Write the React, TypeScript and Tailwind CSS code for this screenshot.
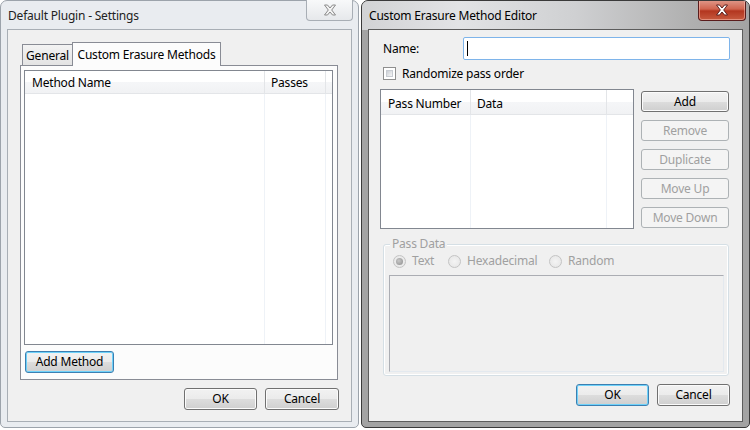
import React from "react";

function CloseGlyph({ active }: { active: boolean }) {
  return (
    <svg width="14" height="12" viewBox="0 0 14 12">
      <path
        d="M1.5 1 H4.5 L7 4 L9.5 1 H12.5 L8.7 6 L12.5 11 H9.5 L7 8 L4.5 11 H1.5 L5.3 6 Z"
        fill={active ? "#ffffff" : "#f4f4f4"}
        stroke={active ? "#5a2020" : "#8a8a8a"}
        strokeWidth="1"
        strokeLinejoin="round"
      />
    </svg>
  );
}

function Btn({
  label,
  w,
  h = 22,
  disabled,
  def,
  className = "",
}: {
  label: string;
  w: string;
  h?: number;
  disabled?: boolean;
  def?: boolean;
  className?: string;
}) {
  let cls =
    "flex items-center justify-center rounded-[3px] border text-[12px] leading-none ";
  if (disabled) {
    cls += "border-[#adb2b5] bg-[#f4f4f4] text-[#a0a0a0] ";
  } else if (def) {
    cls +=
      "border-[#3c7fb1] bg-[linear-gradient(#f2f2f2_0%,#ebebeb_50%,#dddddd_50%,#cfcfcf_100%)] text-black shadow-[inset_0_0_0_1px_#6fd2fa] ";
  } else {
    cls +=
      "border-[#707070] bg-[linear-gradient(#f2f2f2_0%,#ebebeb_50%,#dddddd_50%,#cfcfcf_100%)] text-black shadow-[inset_0_0_0_1px_#fbfbfb] ";
  }
  return (
    <div className={cls + w + " " + className} style={{ height: h }}>
      {label}
    </div>
  );
}

function Radio({ checked }: { checked?: boolean }) {
  return (
    <div className="w-[13px] h-[13px] rounded-full border border-[#c4c4c4] bg-[radial-gradient(circle,#f4f4f4,#e4e4e4)] flex items-center justify-center shrink-0">
      {checked && (
        <div className="w-[7px] h-[7px] rounded-full bg-[radial-gradient(circle_at_40%_40%,#c8c8c8,#8c8c8c)]" />
      )}
    </div>
  );
}

export default function App() {
  return (
    <div className="w-[750px] h-[430px] bg-white flex font-['Noto_Sans',sans-serif] text-[12px] tracking-[-0.2px] text-black overflow-hidden select-none">
      {/* Left window (inactive) */}
      <div className="w-[359px] h-[428px] rounded-t-[7px] rounded-b-[5px] border border-[#9ca3ab] bg-[#e9ecf0] flex flex-col px-[6px] pb-[5px]">
        <div className="h-[28px] flex items-start relative">
          <div className="pt-[6px] pl-[1px] text-[12px] text-[#222]">
            Default Plugin - Settings
          </div>
          <div className="absolute right-[-1px] top-[-1px] w-[47px] h-[21px] rounded-b-[4px] border border-t-0 border-[#a8aeb5] bg-[linear-gradient(#f8f9fa,#e6e8eb)] flex items-center justify-center">
            <CloseGlyph active={false} />
          </div>
        </div>
        <div className="flex-1 border border-[#a8aeb5] bg-[#f0f0f0] flex flex-col">
          <div className="pl-[12px] pt-[12px] w-[331px]">
            <div className="h-[23px] flex items-end pl-[2px]">
              <div className="w-[50px] h-[21px] border border-r-0 border-b-0 border-[#898c95] bg-[linear-gradient(#f3f3f3,#e3e3e3)] flex items-center justify-center pt-[1px] text-[12px]">
                General
              </div>
              <div className="w-[149px] h-[24px] border border-b-0 border-[#898c95] bg-[#fcfcfc] relative z-10 mb-[-1px] flex items-start justify-center pt-[3px] text-[12px]">
                Custom Erasure Methods
              </div>
            </div>
            <div className="w-[318px] h-[315px] border border-[#898c95] bg-[#fcfcfc] pl-[3px] pt-[4px]">
              <div className="w-[309px] h-[275px] border border-[#828790] bg-white flex flex-col">
                <div className="h-[23px] flex bg-[linear-gradient(#ffffff_0%,#ffffff_50%,#f5f6f8_50%,#f1f2f4_100%)] border-b border-[#e3e5e8]">
                  <div className="w-[240px] border-r border-[#e3e5e8] pl-[7px] pt-[2px] flex items-center">
                    Method Name
                  </div>
                  <div className="w-[61px] border-r border-[#e3e5e8] pl-[6px] pt-[2px] flex items-center">
                    Passes
                  </div>
                  <div className="flex-1" />
                </div>
                <div className="flex-1 flex">
                  <div className="w-[240px] border-r border-[#eef2f7]" />
                  <div className="w-[61px] border-r border-[#eef2f7]" />
                </div>
              </div>
              <Btn label="Add Method" w="w-[89px]" def className="mt-[6px] ml-[1px]" />
            </div>
          </div>
          <div className="flex justify-end gap-[8px] pr-[12px] pt-[8px]">
            <Btn label="OK" w="w-[73px]" />
            <Btn label="Cancel" w="w-[74px]" />
          </div>
        </div>
      </div>

      {/* Right window (active) */}
      <div className="ml-[2px] w-[389px] h-[428px] rounded-t-[7px] rounded-b-[5px] border border-[#3a3a3a] bg-[#a3a3a3] flex flex-col px-[6px] pb-[5px] relative overflow-hidden">
        <div className="absolute left-0 top-0 right-0 h-[29px] bg-[linear-gradient(90deg,#d2d3d5_0%,#e2e3e5_25%,#cfd0d2_55%,#b0b0b0_85%,#a3a3a3_100%)]" />
        <div className="h-[28px] flex items-start relative">
          <div className="pt-[6px] pl-[1px] text-[12px] text-black">
            Custom Erasure Method Editor
          </div>
          <div className="absolute right-[-3px] top-[-1px] w-[48px] h-[21px] rounded-b-[4px] border border-t-0 border-[#5a1c1c] bg-[linear-gradient(#e09a8c_0%,#d0644f_45%,#b3361f_55%,#c75a3f_100%)] flex items-center justify-center shadow-[inset_0_0_0_1px_rgba(255,200,190,0.5)]">
            <CloseGlyph active />
          </div>
        </div>
        <div className="flex-1 border border-[#5c5c5c] bg-[#f0f0f0] flex flex-col relative">
          <div className="flex items-center pt-[7px] pl-[14px]">
            <div className="w-[80px]">Name:</div>
            <div className="w-[267px] h-[23px] border border-[#7eb4ea] rounded-[2px] bg-white flex items-center pl-[3px]">
              <div className="w-[1px] h-[15px] bg-black" />
            </div>
          </div>
          <div className="flex items-center mt-[7px] pl-[14px] h-[13px]">
            <div className="w-[13px] h-[13px] border border-[#8f8f8f] bg-white p-[2px]">
              <div className="w-full h-full bg-[linear-gradient(135deg,#cbcfd5,#f6f6f6)] border border-[#c8ccd2]" />
            </div>
            <div className="pl-[6px]">Randomize pass order</div>
          </div>
          <div className="flex pl-[11px] pt-[9px]">
            <div className="w-[254px] h-[140px] border border-[#828790] bg-white flex flex-col">
              <div className="h-[25px] flex bg-[linear-gradient(#ffffff_0%,#ffffff_50%,#f5f6f8_50%,#f1f2f4_100%)] border-b border-[#e3e5e8]">
                <div className="w-[90px] border-r border-[#e3e5e8] pl-[7px] pt-[3px] flex items-center">
                  Pass Number
                </div>
                <div className="w-[136px] border-r border-[#e3e5e8] pl-[6px] pt-[3px] flex items-center">
                  Data
                </div>
                <div className="flex-1" />
              </div>
              <div className="flex-1 flex">
                <div className="w-[90px] border-r border-[#eef2f7]" />
                <div className="w-[136px] border-r border-[#eef2f7]" />
              </div>
            </div>
            <div className="ml-[7px] pt-[2px] flex flex-col gap-[8px]">
              <Btn label="Add" w="w-[88px]" h={21} />
              <Btn label="Remove" w="w-[88px]" h={21} disabled />
              <Btn label="Duplicate" w="w-[88px]" h={21} disabled />
              <Btn label="Move Up" w="w-[88px]" h={21} disabled />
              <Btn label="Move Down" w="w-[88px]" h={21} disabled />
            </div>
          </div>
          <div className="ml-[14px] mt-[15px] w-[346px] h-[132px] border border-[#d5dfe5] rounded-[3px] relative shadow-[inset_0_0_0_1px_#ffffff]">
            <div className="absolute left-[6px] top-[-9px] px-[2px] bg-[#f0f0f0] text-[#a0a0a0] leading-[16px]">
              Pass Data
            </div>
            <div className="flex items-center h-[14px] mt-[9px] pl-[9px] text-[#a0a0a0]">
              <Radio checked />
              <div className="pl-[6px] w-[42px]">Text</div>
              <Radio />
              <div className="pl-[6px] w-[88px]">Hexadecimal</div>
              <Radio />
              <div className="pl-[6px]">Random</div>
            </div>
            <div className="mt-[7px] ml-[5px] w-[335px] h-[97px] border border-[#abadb3] border-r-[#e3e9ef] border-b-[#e3e9ef] bg-[#f0f0f0]" />
          </div>
          <div className="flex justify-end gap-[8px] pr-[12px] pt-[8px]">
            <Btn label="OK" w="w-[73px]" def />
            <Btn label="Cancel" w="w-[73px]" />
          </div>
        </div>
      </div>
    </div>
  );
}
